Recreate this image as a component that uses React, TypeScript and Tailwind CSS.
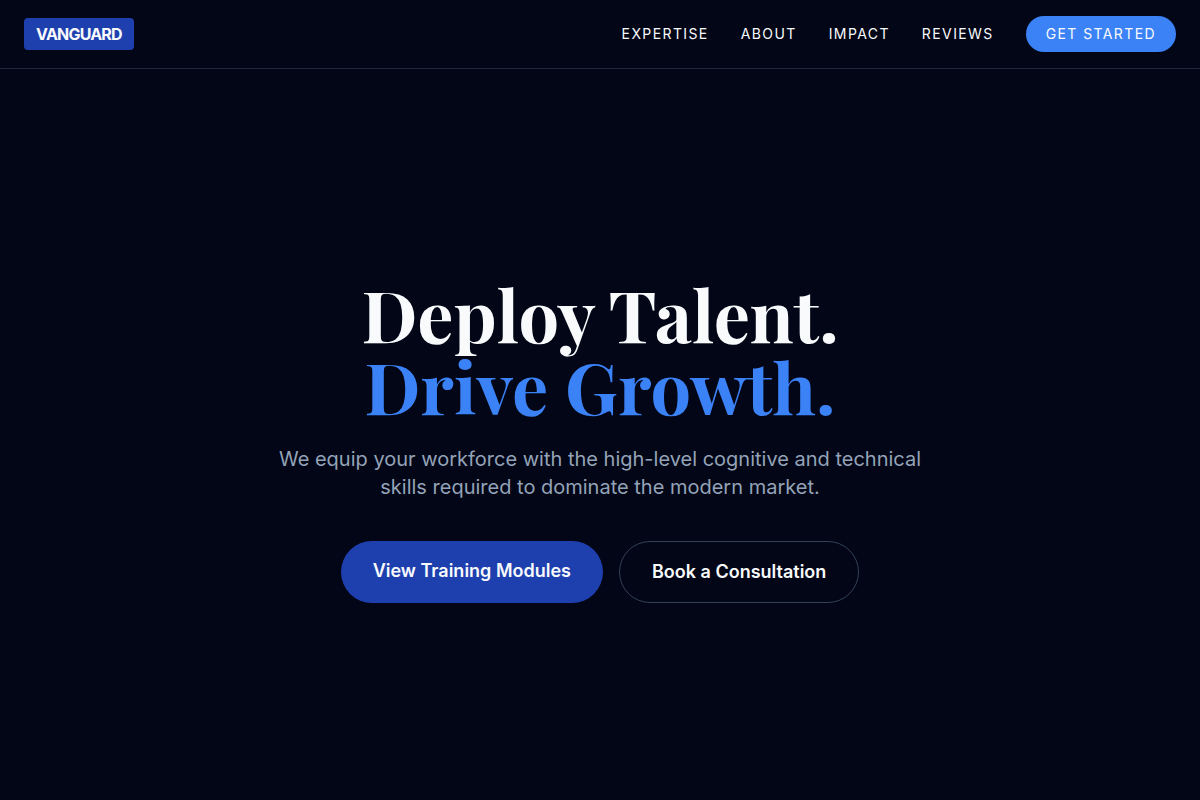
const links = [
  { label: "Expertise", href: "#expertise" },
  { label: "About", href: "#about" },
  { label: "Impact", href: "#impact" },
  { label: "Reviews", href: "#reviews" },
];

function Header() {
  return (
    <header className="flex items-center justify-between border-b border-[#1e293b] px-6 py-4">
      <a href="#top" className="rounded bg-[#1e40af] px-3 py-1 text-base font-bold tracking-tighter">
        VANGUARD
      </a>
      <nav className="flex items-center gap-8 text-sm tracking-widest uppercase">
        {links.map((link) => (
          <a key={link.href} href={link.href}>
            {link.label}
          </a>
        ))}
        <a href="#contact" className="rounded-full bg-[#3b82f6] px-5 py-2">
          Get Started
        </a>
      </nav>
    </header>
  );
}

function Hero() {
  return (
    <main className="flex flex-1 flex-col items-center justify-center px-6 pt-[11px] text-center">
      <h1 className="mb-6 font-['Playfair_Display','DejaVu_Serif','Liberation_Serif',serif] text-7xl leading-none font-bold">
        Deploy Talent.
        <br />
        <span className="text-[#3b82f6]">Drive Growth.</span>
      </h1>
      <p className="mb-10 max-w-2xl text-xl text-[#94a3b8]">
        We equip your workforce with the high-level cognitive and technical skills required to dominate the modern
        market.
      </p>
      <div className="flex flex-wrap justify-center gap-4 text-lg font-semibold">
        <a href="#expertise" className="rounded-full bg-[#1e40af] px-8 py-4">
          View Training Modules
        </a>
        <a href="#contact" className="rounded-full border border-[#334155] px-8 py-4">
          Book a Consultation
        </a>
      </div>
    </main>
  );
}

export default function App() {
  return (
    <div
      id="top"
      className="flex min-h-screen flex-col bg-[#020617] font-['Inter',sans-serif] text-[#f8fafc] antialiased"
    >
      <Header />
      <Hero />
    </div>
  );
}
